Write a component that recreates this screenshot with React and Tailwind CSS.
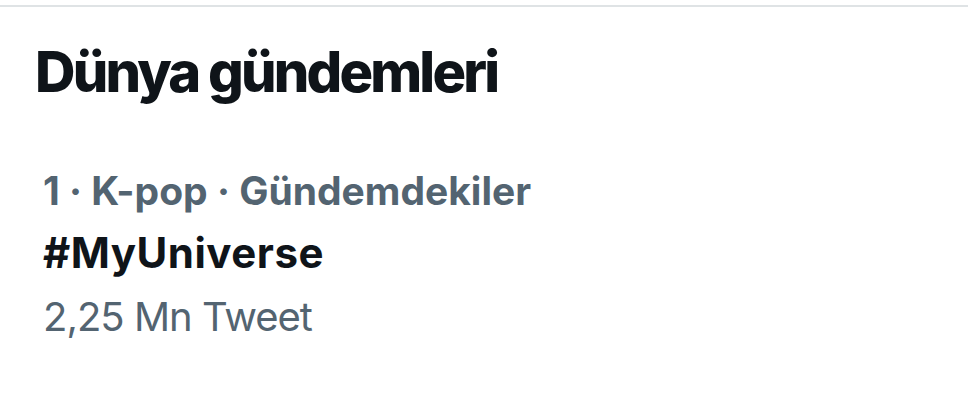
export default function App() {
  return (
    <div className="w-[971px] h-[411px] bg-white overflow-hidden" style={{ fontFamily: 'Inter, "Liberation Sans", sans-serif' }}>
      <div className="mt-[5px] h-[2px] w-[968px] bg-[#dfe3e5]" />
      <div className="pl-[35px] pt-[33px]">
        <h2 className="text-[56px] leading-[64px] font-extrabold text-[#0f1419] tracking-[-2.8px]">Dünya gündemleri</h2>
      </div>
      <div className="pl-[43px] pt-[56px] flex flex-col">
        <div className="text-[39px] leading-[62px] font-bold text-[#536471]">1 · K-pop · Gündemdekiler</div>
        <div className="text-[42px] leading-[62px] font-bold text-[#0f1419] tracking-[0.5px]">#MyUniverse</div>
        <div className="mt-[2px] text-[40px] leading-[62px] font-normal text-[#536471] tracking-[-1px]">2,25 Mn Tweet</div>
      </div>
    </div>
  );
}
